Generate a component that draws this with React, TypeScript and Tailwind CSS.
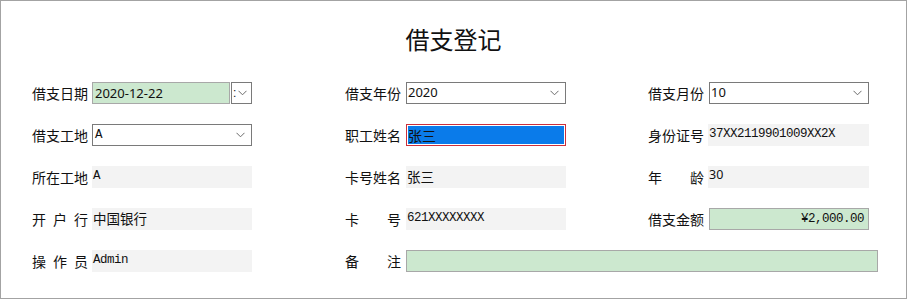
import React from 'react';

const cjk = '[font-family:"Noto_Sans_CJK_SC","Noto_Sans",sans-serif]';
const mono = '[font-family:"Liberation_Mono","Noto_Sans_CJK_SC",monospace]';

const Chevron: React.FC = () => (
    <svg width="9" height="6" viewBox="0 0 9 6" className="shrink-0">
        <path d="M0.5 0.8 L4.5 4.8 L8.5 0.8" fill="none" stroke="#6b6b6b" strokeWidth="1" />
    </svg>
);

const Label: React.FC<{ text: string; spread?: boolean; gap?: string }> = ({ text, spread, gap = 'mr-[4px]' }) => (
    <div className={`w-[56px] shrink-0 ${gap} text-[14px] leading-[22px] text-[#111] ${cjk} ${spread ? 'flex justify-between' : ''}`}>
        {spread ? text.split('').map((c, i) => <span key={i}>{c}</span>) : text}
    </div>
);

const Select: React.FC<{ value: string; width?: string }> = ({ value, width = 'w-[160px]' }) => (
    <div className={`${width} h-[22px] border border-[#7a7a7a] bg-white flex items-center justify-between pl-[1px] pr-[6px]`}>
        <span className={`text-[13px] text-[#111] [font-family:"Noto_Sans","Noto_Sans_CJK_SC",sans-serif]`}>{value}</span>
        <Chevron />
    </div>
);

const ReadOnly: React.FC<{ value: string; isMono?: boolean; width?: string }> = ({ value, isMono, width = 'w-[160px]' }) => (
    <div className={`${width} h-[22px] bg-[#f3f3f3] px-[1px] ${isMono ? `${mono} text-[12.5px] tracking-[-0.5px] leading-[18px] pt-[1px]` : `${cjk} text-[13.5px] leading-[18px] pt-[1px]`} text-[#111] whitespace-nowrap`}>
        {value}
    </div>
);

const App: React.FC = () => {
    return (
        <div className="w-[910px] h-[300px] bg-white">
            <div className="w-[907px] h-[299px] border border-[#a3a3a3] bg-white">
                <h1 className={`mt-[22px] h-[32px] leading-[32px] text-center text-[24px] font-normal text-[#111] ${cjk}`}>借支登记</h1>

                <div className="mt-[27px] pl-[31px] grid grid-cols-[313px_303px_1fr] grid-rows-[22px_22px_22px_22px_22px] gap-y-[20px]">
                    {/* row 1 */}
                    <div className="flex items-center">
                        <Label text="借支日期" />
                        <div className={`w-[138px] h-[22px] border border-[#a8a8a8] bg-[#cce8cf] pl-[2px] text-[13px] leading-[20px] text-[#111] [font-family:"Noto_Sans",sans-serif]`}>2020-12-22</div>
                        <div className="ml-[1px] w-[21px] h-[22px] border border-[#7a7a7a] bg-white flex items-center pl-[1px] gap-[2px]">
                            <span className="text-[12px] leading-none text-[#222] [font-family:'Liberation_Sans',sans-serif]">:</span>
                            <Chevron />
                        </div>
                    </div>
                    <div className="flex items-center">
                        <Label text="借支年份" gap="mr-[5px]" />
                        <Select value="2020" />
                    </div>
                    <div className="flex items-center">
                        <Label text="借支月份" gap="mr-[5px]" />
                        <Select value="10" />
                    </div>

                    {/* row 2 */}
                    <div className="flex items-center">
                        <Label text="借支工地" />
                        <div className="w-[160px] h-[22px] border border-[#7a7a7a] bg-white flex items-center justify-between pl-[2px] pr-[6px]">
                            <span className={`${mono} text-[12.5px] text-[#111]`}>A</span>
                            <Chevron />
                        </div>
                    </div>
                    <div className="flex items-center">
                        <Label text="职工姓名" gap="mr-[5px]" />
                        <div className="w-[160px] h-[22px] border border-[#cc2f3a] bg-white p-[1px]">
                            <div className="h-full bg-[#0a7bea] flex items-center">
                                <span className={`${cjk} text-[14px] leading-[18px] text-[#111]`}>张三</span>
                            </div>
                        </div>
                    </div>
                    <div className="flex items-center">
                        <Label text="身份证号" />
                        <ReadOnly value="37XX2119901009XX2X" isMono width="w-[161px]" />
                    </div>

                    {/* row 3 */}
                    <div className="flex items-center">
                        <Label text="所在工地" />
                        <ReadOnly value="A" isMono />
                    </div>
                    <div className="flex items-center">
                        <Label text="卡号姓名" gap="mr-[5px]" />
                        <ReadOnly value="张三" />
                    </div>
                    <div className="flex items-center">
                        <Label text="年龄" spread />
                        <div className={`w-[161px] h-[22px] bg-[#f3f3f3] px-[1px] pt-[1px] text-[12.5px] leading-[16px] text-[#111] [font-family:"Noto_Sans",sans-serif]`}>30</div>
                    </div>

                    {/* row 4 */}
                    <div className="flex items-center">
                        <Label text="开户行" spread />
                        <ReadOnly value="中国银行" />
                    </div>
                    <div className="flex items-center">
                        <Label text="卡号" spread gap="mr-[5px]" />
                        <ReadOnly value="621XXXXXXXX" isMono />
                    </div>
                    <div className="flex items-center">
                        <Label text="借支金额" gap="mr-[5px]" />
                        <div className={`w-[160px] h-[22px] border border-[#a8a8a8] bg-[#cce8cf] pr-[4px] text-right ${mono} text-[12.5px] tracking-[-0.5px] leading-[20px] text-[#111]`}>¥2,000.00</div>
                    </div>

                    {/* row 5 */}
                    <div className="flex items-center">
                        <Label text="操作员" spread />
                        <ReadOnly value="Admin" isMono />
                    </div>
                    <div className="col-span-2 flex items-center">
                        <Label text="备注" spread gap="mr-[5px]" />
                        <div className="w-[472px] h-[22px] border border-[#a8a8a8] bg-[#cce8cf]" />
                    </div>
                </div>
            </div>
        </div>
    );
};

export default App;
